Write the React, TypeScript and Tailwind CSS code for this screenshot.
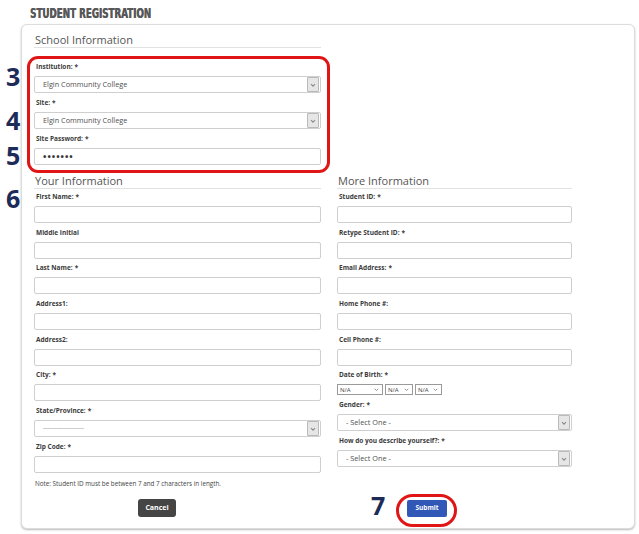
import React from "react";

const Chevron = ({ className = "" }: { className?: string }) => (
  <svg viewBox="0 0 10 10" className={className} fill="none" stroke="#8a8a8a" strokeWidth="1.3">
    <path d="M2.5 4 L5 6.5 L7.5 4" />
  </svg>
);

const Label = ({ text, req = false }: { text: string; req?: boolean }) => (
  <div className="h-[10px] leading-[10px] pl-[2px] text-[6.5px] font-bold text-[#3a3a3a] whitespace-nowrap">
    {text}
    {req && <span className="ml-[2px]">*</span>}
  </div>
);

const TextInput = ({ children }: { children?: React.ReactNode }) => (
  <div className="mt-[4px] h-[17px] w-full border border-[#cfcfcf] rounded-[2px] bg-white flex items-center pl-[8px]">
    {children}
  </div>
);

const Select = ({ text, dashes = false }: { text: string; dashes?: boolean }) => (
  <div className="mt-[4px] h-[17px] w-full border border-[#cfcfcf] rounded-[2px] bg-white flex items-center justify-between">
    <span
      className={
        dashes
          ? "pl-[8px] text-[5px] leading-none text-[#777] tracking-[-0.3px]"
          : "pl-[8px] text-[7.3px] leading-none text-[#505050]"
      }
    >
      {text}
    </span>
    <div className="mr-[1px] h-[15px] w-[12px] bg-[#e6e6e6] border border-[#b9b9b9] rounded-[1px] flex items-center justify-center">
      <Chevron className="w-[8px] h-[8px]" />
    </div>
  </div>
);

const Field = ({ label, req, first }: { label: string; req?: boolean; first?: boolean }) => (
  <div className={first ? "mt-[3px]" : "mt-[4.7px]"}>
    <Label text={label} req={req} />
    <TextInput />
  </div>
);

const Heading = ({ text }: { text: string }) => (
  <div className="h-[15px] leading-[14px] pl-[1px] text-[11px] text-[#555] border-b border-[#e2e2e2]">
    {text}
  </div>
);

const DobSelect = ({ w }: { w: string }) => (
  <div className={`${w} h-[11px] border border-[#9a9a9a] bg-white flex items-center justify-between pl-[2px] pr-[2px]`}>
    <span className="text-[6px] leading-none text-[#444]">N/A</span>
    <Chevron className="w-[7px] h-[7px]" />
  </div>
);

export default function App() {
  return (
    <div className="relative w-[639px] h-[534px] bg-white font-['Open_Sans',sans-serif] overflow-hidden">
      <div className="h-[24px] pl-[30px] pt-[6px]">
        <div className="origin-left scale-x-[0.71] font-['DejaVu_Sans_Condensed','DejaVu_Sans',sans-serif] font-bold text-[13.7px] leading-[14px] text-[#585858] whitespace-nowrap [text-shadow:0.5px_0_0_#585858]">
          STUDENT REGISTRATION
        </div>
      </div>

      <div className="ml-[21px] w-[614px] border border-[#dcdcdc] rounded-[6px] shadow-[0_1px_2px_rgba(0,0,0,0.28)] px-[12px] pt-[8px] pb-[11px] bg-white">
        {/* School Information */}
        <div className="w-[287px]">
          <Heading text="School Information" />
          <div className="mt-[14px]">
            <Label text="Institution:" req />
            <Select text="Elgin Community College" />
          </div>
          <div className="mt-[5px]">
            <Label text="Site:" req />
            <Select text="Elgin Community College" />
          </div>
          <div className="mt-[5px]">
            <Label text="Site Password:" req />
            <TextInput>
              <span className="text-[9px] leading-none tracking-[1px] text-[#333] font-bold">•••••••</span>
            </TextInput>
          </div>
        </div>

        {/* Two columns */}
        <div className="mt-[9px] flex gap-[16px]">
          <div className="w-[287px]">
            <Heading text="Your Information" />
            <Field label="First Name:" req first />
            <Field label="Middle Initial" />
            <Field label="Last Name:" req />
            <Field label="Address1:" />
            <Field label="Address2:" />
            <Field label="City:" req />
            <div className="mt-[4.7px]">
              <Label text="State/Province:" req />
              <Select text="-------------------------------" dashes />
            </div>
            <Field label="Zip Code:" req />
          </div>
          <div className="w-[235px]">
            <Heading text="More Information" />
            <Field label="Student ID:" req first />
            <Field label="Retype Student ID:" req />
            <Field label="Email Address:" req />
            <Field label="Home Phone #:" />
            <Field label="Cell Phone #:" />
            <div className="mt-[4.7px]">
              <Label text="Date of Birth:" req />
              <div className="mt-[4px] flex gap-[2px]">
                <DobSelect w="w-[46px]" />
                <DobSelect w="w-[28px]" />
                <DobSelect w="w-[27px]" />
              </div>
            </div>
            <div className="mt-[5px]">
              <Label text="Gender:" req />
              <Select text="- Select One -" />
            </div>
            <div className="mt-[5px]">
              <Label text="How do you describe yourself?:" req />
              <Select text="- Select One -" />
            </div>
          </div>
        </div>

        <div className="mt-[6px] h-[10px] leading-[10px] pl-[1px] text-[6.3px] text-[#444] whitespace-nowrap">
          Note: Student ID must be between 7 and 7 characters in length.
        </div>

        <div className="mt-[10px] flex items-start">
          <div className="ml-[104px] w-[38px] h-[18px] bg-[#454545] rounded-[3px] flex items-center justify-center text-white font-bold text-[7px]">
            Cancel
          </div>
          <div className="ml-[231px] mt-[1px] w-[40px] h-[17px] bg-[#3157b7] rounded-[2px] flex items-center justify-center text-white font-bold text-[6.5px]">
            Submit
          </div>
        </div>
      </div>

      {/* annotation overlays */}
      <div className="absolute left-[27px] top-[56px] w-[303px] h-[117px] border-[3px] border-[#e01515] rounded-[11px]" />
      <div className="absolute left-[396px] top-[494px] w-[61px] h-[33px] border-[3px] border-[#e01515] rounded-full" />

      <div className="absolute left-[6px] top-[63.5px] text-[25px] leading-[25px] font-bold text-[#1c2b58]">3</div>
      <div className="absolute left-[6px] top-[107.5px] text-[25px] leading-[25px] font-bold text-[#1c2b58]">4</div>
      <div className="absolute left-[6px] top-[142.5px] text-[25px] leading-[25px] font-bold text-[#1c2b58]">5</div>
      <div className="absolute left-[6px] top-[185.5px] text-[25px] leading-[25px] font-bold text-[#1c2b58]">6</div>
      <div className="absolute left-[371px] top-[492.5px] text-[25px] leading-[25px] font-bold text-[#1c2b58]">7</div>
    </div>
  );
}
